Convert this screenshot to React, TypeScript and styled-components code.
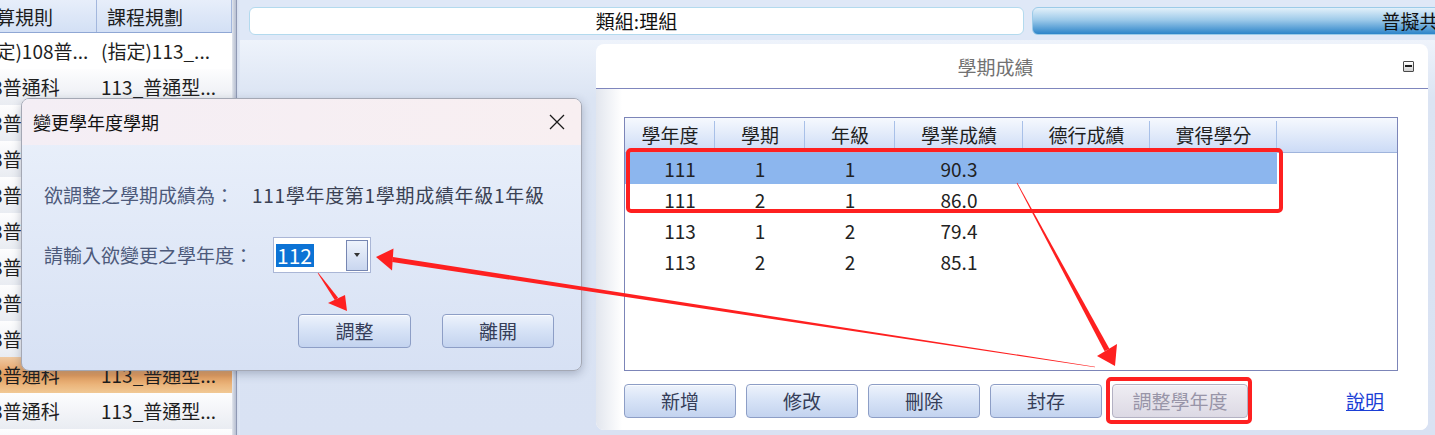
import React from "react";
import styled, { createGlobalStyle } from "styled-components";

const FONT = `"Noto Sans CJK TC", "Noto Sans", "Liberation Sans", sans-serif`;

const GlobalStyle = createGlobalStyle`
  html, body { margin: 0; padding: 0; overflow: hidden; background: #dde6f5; }
  body { font-family: ${FONT}; }
  * { box-sizing: border-box; }
`;

const Page = styled.div`
  position: relative;
  width: 1435px;
  height: 435px;
  overflow: hidden;
  display: flex;
  background: #dde6f5;
`;

/* ---------- left grid ---------- */
const LeftPanel = styled.div`
  flex: 0 0 240px;
  display: flex;
  height: 100%;
`;
const GridViewport = styled.div`
  width: 232px;
  height: 100%;
  overflow: hidden;
  background: #fff;
`;
const GridTable = styled.div`
  margin-left: -33px;
  width: 265px;
`;
const GridHeader = styled.div`
  display: grid;
  grid-template-columns: 130px 135px;
  height: 33px;
  background: linear-gradient(#e7eefa, #d3e0f5);
  border-bottom: 1px solid #8fa7d4;
`;
const GridHeadCell = styled.div`
  padding: 2px 0 0 10px;
  font-size: 19px;
  line-height: 30px;
  color: #1c1c1c;
  white-space: nowrap;
  overflow: hidden;
  border-right: 1px solid #a3b7dd;
`;
type RowKind = "plain" | "shade" | "selected";
const rowBg: Record<RowKind, string> = {
  plain: "#ffffff",
  shade: "linear-gradient(#fdfdfe, #e9ecf2)",
  selected: "linear-gradient(#efc9a2, #e49d5d 50%, #f1c995)",
};
const GridRow = styled.div<{ $kind: RowKind }>`
  display: grid;
  grid-template-columns: 130px 135px;
  height: 36px;
  background: ${(p) => rowBg[p.$kind]};
`;
const GridCell = styled.div`
  padding-left: 4px;
  font-size: 19px;
  line-height: 36px;
  color: #1e1e1e;
  white-space: nowrap;
  overflow: hidden;
`;
const PanelEdge = styled.div`
  flex: 0 0 8px;
  background: linear-gradient(
    to right,
    #e3e7ee 0,
    #c9cfdc 2px,
    #b9c1d3 4px,
    #8f99b4 4px,
    #8f99b4 5px,
    #d6deee 5px,
    #dfe8f7 8px
  );
`;

/* ---------- main ---------- */
const Main = styled.div`
  flex: 1;
  min-width: 0;
  display: flex;
  flex-direction: column;
`;
const TopBar = styled.div`
  flex: 0 0 40px;
  display: flex;
  gap: 8px;
  padding: 7px 0 5px 9px;
  background: #dfe8f7;
  overflow: hidden;
`;
const Tab = styled.div<{ $active?: boolean }>`
  flex: 0 0 775px;
  height: 28px;
  border-radius: 6px;
  border: 1px solid ${(p) => (p.$active ? "#9ccbe8" : "#b3daee")};
  background: ${(p) =>
    p.$active ? "linear-gradient(#e2f0fa, #9fcbea 45%, #2c84c9)" : "#ffffff"};
  text-align: center;
  font-size: 19px;
  line-height: 26px;
  color: #111;
  white-space: nowrap;
`;
const Content = styled.div`
  flex: 1;
  display: flex;
  padding: 4px 7px 5px 356px;
  background: linear-gradient(#eef3fb 0, #dbe4f3 58px, #d9e2f3);
`;
const Card = styled.section`
  flex: 1;
  display: flex;
  flex-direction: column;
  background: #fff;
  border-radius: 8px;
  overflow: hidden;
`;
const CardHeader = styled.div`
  flex: 0 0 45px;
  display: flex;
  align-items: center;
  padding-right: 14px;
  border-bottom: 1px solid #7f86bd;
  box-shadow: 0 1px 0 #cdd0e8;
`;
const CardTitle = styled.div`
  flex: 1;
  text-align: center;
  font-size: 19px;
  line-height: 24px;
  color: #727272;
  padding-top: 1px;
`;
const CollapseBox = styled.div`
  width: 11px;
  height: 11px;
  margin-left: 8px;
  border: 1px solid #4a4a4a;
  border-radius: 1px;
  background: linear-gradient(#ffffff, #cfcfcf);
  display: flex;
  align-items: center;
  justify-content: center;
  &::after {
    content: "";
    width: 7px;
    height: 2px;
    background: #1f1f1f;
  }
`;
const CardBody = styled.div`
  flex: 1;
  display: flex;
  flex-direction: column;
  padding: 28px 30px 12px 28px;
  background: linear-gradient(to right, #e2e6ee, #ffffff 26px);
`;

/* ---------- list view ---------- */
const COLS = "90px 90px 90px 128px 127px 127px";
const Table = styled.div`
  flex: 0 0 254px;
  border: 1px solid #7c85b8;
  background: #fff;
  display: flex;
  flex-direction: column;
`;
const TableHead = styled.div`
  flex: 0 0 35px;
  display: grid;
  grid-template-columns: ${COLS} 1fr;
  background: linear-gradient(#f6f9fe, #ccdbf6);
  border-bottom: 1px solid #9fb4dc;
`;
const HeadCell = styled.div`
  position: relative;
  text-align: center;
  font-size: 19px;
  line-height: 34px;
  color: #1f1f1f;
  white-space: nowrap;
  &:not(:last-child)::after {
    content: "";
    position: absolute;
    right: 0;
    top: 3px;
    bottom: 4px;
    width: 1px;
    background: #a8c0e8;
  }
`;
const DataRow = styled.div<{ $selected?: boolean }>`
  display: grid;
  grid-template-columns: ${COLS};
  width: 652px;
  height: 31px;
  background: ${(p) => (p.$selected ? "#8cb6ee" : "transparent")};
`;
const DataCell = styled.div<{ $lead?: boolean }>`
  text-align: center;
  padding-left: ${(p) => (p.$lead ? "20px" : "0")};
  font-size: 19px;
  line-height: 31px;
  color: #222;
`;

/* ---------- buttons ---------- */
const ButtonRow = styled.div`
  margin-top: 13px;
  flex: 0 0 34px;
  display: flex;
  align-items: center;
  gap: 10px;
`;
const ActionButton = styled.button<{ $w?: number }>`
  width: ${(p) => p.$w ?? 112}px;
  height: 34px;
  padding: 0;
  border: 1px solid #8d9ec6;
  border-radius: 4px;
  background: linear-gradient(#eef3fc, #d6e2f6 50%, #c3d3ef);
  box-shadow: inset 0 1px 0 #fafcff;
  font-family: ${FONT};
  font-size: 19px;
  line-height: 32px;
  color: #353d58;
  &:disabled {
    border-color: #b3b1c3;
    background: linear-gradient(#efedf3, #dcd9e4);
    box-shadow: inset 0 1px 0 #f7f6fa;
    color: #9895a8;
  }
`;
const HelpLink = styled.a`
  margin-left: auto;
  margin-right: 14px;
  font-size: 19px;
  line-height: 24px;
  color: #1b3fd6;
  text-decoration: underline;
`;

/* ---------- dialog ---------- */
const Dialog = styled.div`
  position: absolute;
  left: 21px;
  top: 98px;
  width: 561px;
  height: 273px;
  z-index: 5;
  display: flex;
  flex-direction: column;
  border: 1px solid #a4a8b4;
  border-radius: 8px;
  overflow: hidden;
  background: linear-gradient(#ebf1fb, #d7e1f4);
  box-shadow: 0 3px 10px rgba(40, 50, 80, 0.28);
`;
const DialogTitleBar = styled.div`
  flex: 0 0 46px;
  display: flex;
  align-items: center;
  justify-content: space-between;
  padding: 0 16px 0 11px;
  background: linear-gradient(to right, #f4eef5, #f8eff1);
  font-size: 18px;
  color: #111;
`;
const DialogBody = styled.div`
  flex: 1;
  display: flex;
  flex-direction: column;
  padding: 35px 27px 0 22px;
`;
const InfoRow = styled.div<{ $gapTop?: number }>`
  display: flex;
  align-items: center;
  margin-top: ${(p) => p.$gapTop ?? 0}px;
  font-size: 19px;
  white-space: nowrap;
`;
const Label = styled.span<{ $w: number }>`
  flex: 0 0 ${(p) => p.$w}px;
  color: #4d5a7b;
  line-height: 30px;
`;
const Value = styled.span`
  color: #3b4254;
  line-height: 30px;
  letter-spacing: 0.7px;
`;
const Combo = styled.div`
  width: 98px;
  height: 36px;
  border: 1px solid #aab6d6;
  background: #fff;
  display: flex;
  align-items: center;
  padding: 0 2px 0 2px;
`;
const ComboText = styled.span`
  background: #0c73d5;
  color: #fff;
  font-size: 21px;
  line-height: 23px;
  padding: 0 2px 0 1px;
`;
const ComboDrop = styled.div`
  margin-left: auto;
  width: 22px;
  height: 31px;
  border: 1px solid #7686b2;
  background: linear-gradient(#eef3fc, #c9d6ef);
  display: flex;
  align-items: center;
  justify-content: center;
  &::after {
    content: "";
    border-left: 3.5px solid transparent;
    border-right: 3.5px solid transparent;
    border-top: 4px solid #333;
  }
`;
const DialogButtons = styled.div`
  margin-top: 41px;
  display: flex;
  justify-content: flex-end;
  gap: 31px;
`;

/* ---------- annotations ---------- */
const Overlay = styled.svg`
  position: absolute;
  left: 0;
  top: 0;
  width: 1435px;
  height: 435px;
  pointer-events: none;
  z-index: 10;
`;

type LeftRow = { a: string; b: string; kind: RowKind };
const leftRows: LeftRow[] = [
  { a: "(指定)108普...", b: "(指定)113_...", kind: "plain" },
  ...Array.from({ length: 8 }, (): LeftRow => ({ a: "108普通科", b: "113_普通型...", kind: "shade" })),
  { a: "108普通科", b: "113_普通型...", kind: "selected" },
  { a: "108普通科", b: "113_普通型...", kind: "shade" },
  { a: "108普通科", b: "113_普通型...", kind: "shade" },
];

const headers = ["學年度", "學期", "年級", "學業成績", "德行成績", "實得學分", ""];
const scores = [
  ["111", "1", "1", "90.3", "", ""],
  ["111", "2", "1", "86.0", "", ""],
  ["113", "1", "2", "79.4", "", ""],
  ["113", "2", "2", "85.1", "", ""],
];

export default function App() {
  return (
    <>
      <GlobalStyle />
      <Page>
        <LeftPanel>
          <GridViewport>
            <GridTable>
              <GridHeader>
                <GridHeadCell>計算規則</GridHeadCell>
                <GridHeadCell>課程規劃</GridHeadCell>
              </GridHeader>
              {leftRows.map((r, i) => (
                <GridRow key={i} $kind={r.kind}>
                  <GridCell>{r.a}</GridCell>
                  <GridCell>{r.b}</GridCell>
                </GridRow>
              ))}
            </GridTable>
          </GridViewport>
          <PanelEdge />
        </LeftPanel>

        <Main>
          <TopBar>
            <Tab>類組:理組</Tab>
            <Tab $active>普擬共同</Tab>
          </TopBar>
          <Content>
            <Card>
              <CardHeader>
                <CardTitle>學期成績</CardTitle>
                <CollapseBox />
              </CardHeader>
              <CardBody>
                <Table>
                  <TableHead>
                    {headers.map((h, i) => (
                      <HeadCell key={i}>{h}</HeadCell>
                    ))}
                  </TableHead>
                  {scores.map((row, i) => (
                    <DataRow key={i} $selected={i === 0}>
                      {row.map((c, j) => (
                        <DataCell key={j} $lead={j === 0}>
                          {c}
                        </DataCell>
                      ))}
                    </DataRow>
                  ))}
                </Table>
                <ButtonRow>
                  <ActionButton>新增</ActionButton>
                  <ActionButton>修改</ActionButton>
                  <ActionButton>刪除</ActionButton>
                  <ActionButton>封存</ActionButton>
                  <ActionButton $w={136} disabled>
                    調整學年度
                  </ActionButton>
                  <HelpLink href="#">說明</HelpLink>
                </ButtonRow>
              </CardBody>
            </Card>
          </Content>
        </Main>

        <Dialog>
          <DialogTitleBar>
            <span>變更學年度學期</span>
            <svg width="16" height="16" viewBox="0 0 16 16">
              <path d="M1 1 L15 15 M15 1 L1 15" stroke="#1a1a1a" strokeWidth="1.3" fill="none" />
            </svg>
          </DialogTitleBar>
          <DialogBody>
            <InfoRow>
              <Label $w={208}>欲調整之學期成績為：</Label>
              <Value>111學年度第1學期成績年級1年級</Value>
            </InfoRow>
            <InfoRow $gapTop={27}>
              <Label $w={229}>請輸入欲變更之學年度：</Label>
              <Combo>
                <ComboText>112</ComboText>
                <ComboDrop />
              </Combo>
            </InfoRow>
            <DialogButtons>
              <ActionButton $w={113}>調整</ActionButton>
              <ActionButton $w={112}>離開</ActionButton>
            </DialogButtons>
          </DialogBody>
        </Dialog>

        <Overlay viewBox="0 0 1435 435">
          <g fill="#fe2020">
            <rect x="628" y="150" width="653" height="61" rx="3" fill="none" stroke="#fe2020" strokeWidth="4" />
            <rect x="1108" y="379" width="142" height="43" rx="3" fill="none" stroke="#fe2020" strokeWidth="4" />
            <polygon points="1016.74,183.14 1104.62,351.28 1109.38,348.72 1017.26,182.86" />
            <polygon points="1115,366 1097,356 1117,344" />
            <polygon points="1095.05,366.7 392.88,257.03 392.12,261.97 1094.95,367.3" />
            <polygon points="376,257 393.5,248.5 392,270.5" />
            <polygon points="317.76,273.17 334.9,300.2 338.1,297.8 318.24,272.83" />
            <polygon points="347,311 328,303 345,295" />
          </g>
        </Overlay>
      </Page>
    </>
  );
}
